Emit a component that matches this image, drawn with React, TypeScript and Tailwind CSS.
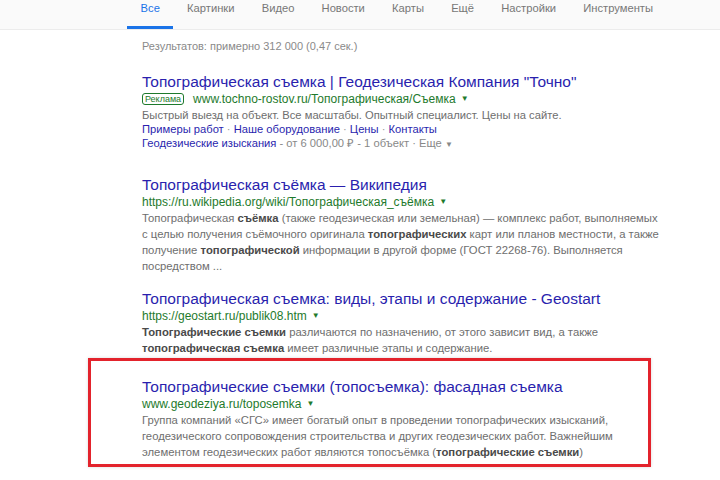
const font = { fontFamily: '"Liberation Sans", Arial, sans-serif' };

const tabs = ["Все", "Картинки", "Видео", "Новости", "Карты", "Ещё", "Настройки", "Инструменты"];

function Caret() {
  return <span className="ml-[5px] inline-block text-[8px] text-[#1e7a2c]">▼</span>;
}

function Title({ children }: { children: React.ReactNode }) {
  return <div className="text-[15.5px] leading-[20px] text-[#2a1fae] whitespace-nowrap">{children}</div>;
}

function Url({ children }: { children: React.ReactNode }) {
  return (
    <div className="flex items-center text-[12px] leading-[14px] text-[#1e7a2c] whitespace-nowrap">
      {children}
      <Caret />
    </div>
  );
}

function Snippet({ lines }: { lines: React.ReactNode[] }) {
  return (
    <div className="mt-[1px] text-[11.3px] leading-[16px] text-[#6e6e6e]">
      {lines.map((l, i) => (
        <div key={i} className="whitespace-nowrap">{l}</div>
      ))}
    </div>
  );
}

export default function App() {
  return (
    <div className="h-[480px] w-[720px] overflow-hidden bg-white" style={font}>
      {/* Tabs */}
      <div className="flex h-[30px] border-b border-[#ececec] bg-[#fafafa] pl-[127px]">
        {tabs.map((t, i) => (
          <div
            key={t}
            className={`h-[29px] px-[13.6px] text-[11.2px] leading-[16px] ${
              i === 0 ? "border-b-[3px] border-[#1a73e8] text-[#1a73e8]" : "text-[#777]"
            }`}
          >
            {t}
          </div>
        ))}
      </div>

      <div className="pl-[142px]">
        <div className="mt-[11px] text-[11px] leading-[10px] text-[#8a8a8a]">Результатов: примерно 312 000 (0,47 сек.)</div>

        {/* Result 1 */}
        <div className="mt-[21px]">
          <Title>Топографическая съемка | Геодезическая Компания "Точно"</Title>
          <div className="flex items-center text-[12px] leading-[14px] text-[#1e7a2c] whitespace-nowrap">
            <span className="mr-[9px] rounded-[3px] border border-[#1e7a2c] px-[2px] text-[9px] leading-[10px]">Реклама</span>
            www.tochno-rostov.ru/Топографическая/Съемка
            <Caret />
          </div>
          <div className="mt-[2px] text-[11.2px] leading-[14px] text-[#6e6e6e] whitespace-nowrap">
            Быстрый выезд на объект. Все масштабы. Опытный специалист. Цены на сайте.
          </div>
          <div className="text-[11.2px] leading-[14px] text-[#2a1fae] whitespace-nowrap">
            Примеры работ <span className="text-[#999]">·</span> Наше оборудование <span className="text-[#999]">·</span> Цены{" "}
            <span className="text-[#999]">·</span> Контакты
          </div>
          <div className="text-[11.2px] leading-[14px] text-[#888] whitespace-nowrap">
            <span className="text-[#2a1fae]">Геодезические изыскания</span> - от 6 000,00 ₽ - 1 объект · Еще{" "}
            <span className="text-[8px]">▼</span>
          </div>
        </div>

        {/* Result 2 */}
        <div className="mt-[23px]">
          <Title>Топографическая съёмка — Википедия</Title>
          <Url>https://ru.wikipedia.org/wiki/Топографическая_съёмка</Url>
          <Snippet
            lines={[
              <>Топографическая <b className="text-[#4a4a4a]">съёмка</b> (также геодезическая или земельная) — комплекс работ, выполняемых</>,
              <>с целью получения съёмочного оригинала <b className="text-[#4a4a4a]">топографических</b> карт или планов местности, а также</>,
              <>получение <b className="text-[#4a4a4a]">топографической</b> информации в другой форме (ГОСТ 22268-76). Выполняется</>,
              <>посредством ...</>,
            ]}
          />
        </div>

        {/* Result 3 */}
        <div className="mt-[15px]">
          <Title>Топографическая съемка: виды, этапы и содержание - Geostart</Title>
          <Url>https://geostart.ru/publik08.htm</Url>
          <Snippet
            lines={[
              <><b className="text-[#4a4a4a]">Топографические съемки</b> различаются по назначению, от этого зависит вид, а также</>,
              <><b className="text-[#4a4a4a]">топографическая съемка</b> имеет различные этапы и содержание.</>,
            ]}
          />
        </div>

        {/* Result 4, highlighted */}
        <div className="-ml-[54px] mt-[2px] h-[109px] w-[563px] border-[3px] border-[#e3232c] pl-[51px] pt-[16px] shadow-[0_0_3px_rgba(0,0,0,0.15)]">
          <Title>Топографические съемки (топосъемка): фасадная съемка</Title>
          <Url>www.geodeziya.ru/toposemka</Url>
          <Snippet
            lines={[
              <>Группа компаний «СГС» имеет богатый опыт в проведении топографических изысканий,</>,
              <>геодезического сопровождения строительства и других геодезических работ. Важнейшим</>,
              <>элементом геодезических работ являются топосъёмка (<b className="text-[#4a4a4a]">топографические съемки</b>)</>,
            ]}
          />
        </div>
      </div>
    </div>
  );
}
